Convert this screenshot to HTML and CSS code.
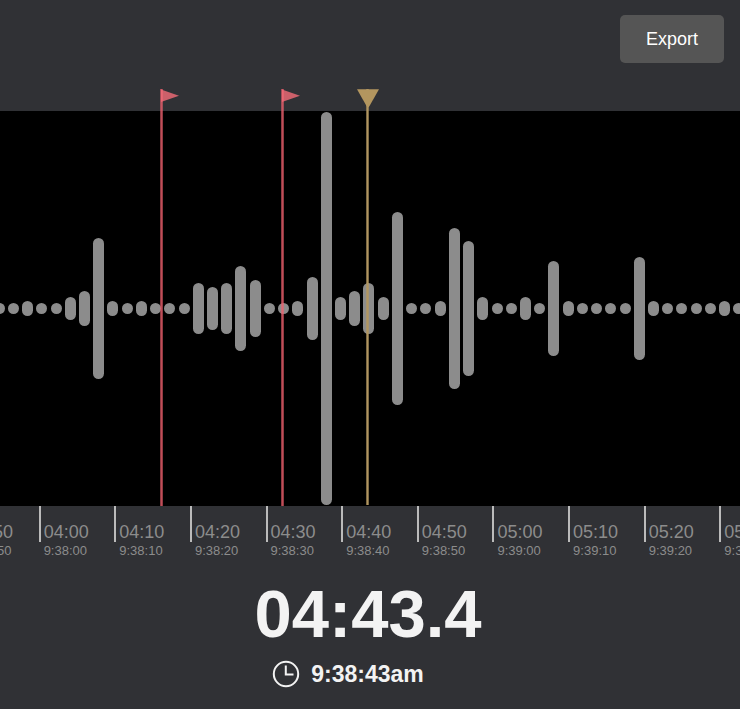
FILE: index.html
```
<!DOCTYPE html>
<html lang="en">
<head>
    <meta charset="UTF-8">
    <meta name="viewport" content="width=device-width, initial-scale=1.0">
    <title>Recording</title>
    <link rel="stylesheet" href="styles.css">
</head>
<body>
    <header class="toolbar">
        <button type="button" class="export-button">Export</button>
    </header>

    <main>
        <div class="timeline">
            <div class="waveform" id="waveform"></div>

            <!-- Bookmarks and playhead lie over the waveform -->
            <div class="marker flag-marker" style="left: 21.6%;">
                <svg class="flag" width="20" height="14" viewBox="0 0 20 14"><path d="M0 0.5 L18 6.8 L0 13 Z"/></svg>
            </div>
            <div class="marker flag-marker" style="left: 38%;">
                <svg class="flag" width="20" height="14" viewBox="0 0 20 14"><path d="M0 0.5 L18 6.8 L0 13 Z"/></svg>
            </div>
            <div class="marker playhead" style="left: 49.5%;">
                <svg class="playhead-handle" width="22" height="20" viewBox="0 0 22 20"><path d="M0 0.3 H22 L12.5 17 Q11 19.5 9.5 17 Z"/></svg>
            </div>
        </div>

        <div class="ruler-window">
            <div class="ruler">
                <div class="tick"><span class="offset">03:50</span><span class="time">9:37:50</span></div>
                <div class="tick"><span class="offset">04:00</span><span class="time">9:38:00</span></div>
                <div class="tick"><span class="offset">04:10</span><span class="time">9:38:10</span></div>
                <div class="tick"><span class="offset">04:20</span><span class="time">9:38:20</span></div>
                <div class="tick"><span class="offset">04:30</span><span class="time">9:38:30</span></div>
                <div class="tick"><span class="offset">04:40</span><span class="time">9:38:40</span></div>
                <div class="tick"><span class="offset">04:50</span><span class="time">9:38:50</span></div>
                <div class="tick"><span class="offset">05:00</span><span class="time">9:39:00</span></div>
                <div class="tick"><span class="offset">05:10</span><span class="time">9:39:10</span></div>
                <div class="tick"><span class="offset">05:20</span><span class="time">9:39:20</span></div>
                <div class="tick"><span class="offset">05:30</span><span class="time">9:39:30</span></div>
            </div>
        </div>

        <div class="readout">
            <div class="position">04:43.4</div>
            <div class="clock">
                <svg width="28" height="28" viewBox="0 0 28 28" fill="none" stroke="#f3f3f3" stroke-width="2">
                    <circle cx="14" cy="14" r="12.2"/>
                    <path d="M13.8 5.5 V14.4 H21.5"/>
                </svg>
                <span>9:38:43am</span>
            </div>
        </div>
    </main>

    <script>
        // Bar heights in pixels, silence is 11
        const levels = [
            11, 11, 15, 11, 11, 23, 35, 141, 15, 11, 15, 11, 11, 11,
            51, 43, 51, 85, 57, 11, 11, 15, 63, 393, 23, 35, 51, 23,
            193, 11, 11, 15, 161, 135, 23, 11, 11, 23, 11, 95, 15,
            11, 11, 11, 11, 103, 15, 11, 11, 11, 11, 15, 11
        ];
        const waveform = document.getElementById('waveform');

        levels.forEach(level => {
            const bar = document.createElement('span');
            bar.className = 'bar';
            bar.style.height = level + 'px';
            waveform.appendChild(bar);
        });
    </script>
</body>
</html>
```
FILE: styles.css
```
* {
    box-sizing: border-box;
}
body {
    margin: 0;
    min-height: 100vh;
    overflow-x: hidden;
    font-family: "Liberation Sans", Arial, sans-serif;
    background-color: #303135;
    color: #f3f3f3;
}
.toolbar {
    display: flex;
    justify-content: flex-end;
    align-items: flex-start;
    height: 111px;
    padding: 15px 16px;
}
.export-button {
    padding: 13px 26px;
    border: none;
    border-radius: 5px;
    background-color: #555;
    color: white;
    font-family: inherit;
    font-size: 18px;
    line-height: 22px;
    cursor: pointer;
}
.timeline {
    position: relative;
    height: 395px;
    background-color: black;
}
.waveform {
    display: grid;
    grid-auto-flow: column;
    grid-auto-columns: 1fr;
    align-items: center;
    justify-items: center;
    height: 100%;
    margin: 0 -6px 0 -8px;
}
.bar {
    width: 11px;
    border-radius: 6px;
    background-color: #8c8c8c;
}
/* solid core with a softer pixel on each side */
.marker {
    position: absolute;
    top: -22px;
    bottom: 0;
    width: 3px;
    border: solid;
    border-width: 0 1px;
    background-clip: padding-box;
}
.flag-marker {
    border-color: rgba(240, 96, 110, 0.6);
    background-color: rgba(240, 96, 110, 0.8);
}
.flag {
    display: block;
    fill: #f36c78;
    opacity: 0.8;
}
.playhead {
    bottom: 1px;
    border-color: rgba(177, 149, 96, 0.7);
    background-color: #b19560;
}
.playhead-handle {
    display: block;
    margin-left: -10px;
    fill: #b3965f;
}
.ruler-window {
    overflow: hidden;
}
.ruler {
    display: grid;
    grid-template-columns: repeat(11, 1fr);
    margin: 0 -55px 0 -37px;
}
.tick {
    padding: 16px 0 0 5px;
    color: #8c8c8c;
    background: linear-gradient(#bbb, #bbb) left top / 2px 36px no-repeat;
}
.offset,
.time {
    display: block;
}
.offset {
    font-size: 18px;
    line-height: 20px;
}
.time {
    font-size: 13px;
    line-height: 18px;
}
.readout {
    display: flex;
    flex-direction: column;
    align-items: center;
    padding-top: 18px;
    font-weight: bold;
}
.position {
    margin-right: 4px;
    font-size: 67px;
    line-height: 72px;
}
.clock {
    display: flex;
    align-items: center;
    gap: 11px;
    margin-top: 10px;
    margin-right: 44px;
    font-size: 23px;
    line-height: 28px;
}
```
